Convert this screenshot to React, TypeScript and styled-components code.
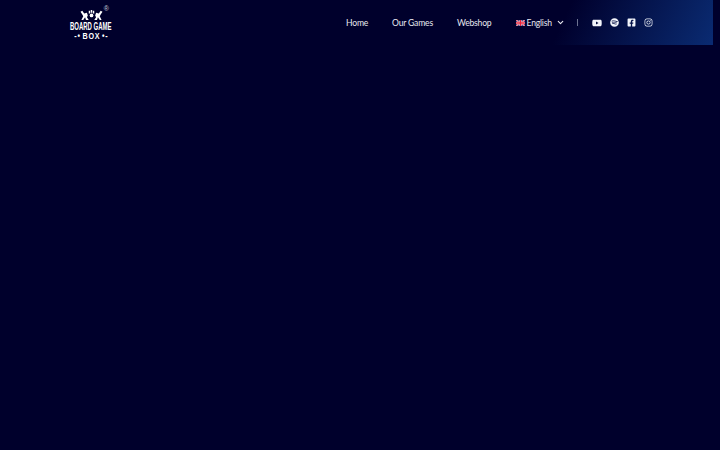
import React from 'react'
import styled, { createGlobalStyle } from 'styled-components'
import { FaYoutube, FaSpotify, FaFacebookSquare, FaInstagram } from 'react-icons/fa'
import { FiChevronDown } from 'react-icons/fi'

const GlobalStyle = createGlobalStyle`
  html, body {
    margin: 0;
    padding: 0;
    height: 100%;
    overflow: hidden;
    background: #00002c;
  }
`

const links = ['Home', 'Our Games', 'Webshop']
const socials = [FaYoutube, FaSpotify, FaFacebookSquare, FaInstagram]

const App: React.FC = () => {
  return (
    <>
      <GlobalStyle />
      <StyledPage>
        <StyledHeader>
          <StyledLogo>
            <StyledMascot viewBox="0 0 24 12" aria-hidden="true">
              <path d="M0 3l2-1 2 3 3-1 1 3-1 2 2 3H6L5 9l-2 3H1l2-4-1-2zM24 3l-2-1-2 3-3-1-1 3 1 2-2 3h3l1-3 2 3h2l-2-4 1-2z" fill="#fff" />
              <path d="M9 2h1.5v3H9zM11.2 1h1.6v3h-1.6zM13.5 2H15v3h-1.5z" fill="#fff" />
              <circle cx="12" cy="7" r="2" fill="#fff" />
            </StyledMascot>
            <StyledLogoTitle>BOARD GAME</StyledLogoTitle>
            <StyledLogoSub>BOX</StyledLogoSub>
            <StyledRegistered>®</StyledRegistered>
          </StyledLogo>
          <StyledNav>
            {links.map((link) => (
              <StyledNavLink key={link}>{link}</StyledNavLink>
            ))}
            <StyledLanguage>
              <StyledFlag viewBox="0 0 60 40" aria-hidden="true">
                <rect width="60" height="40" fill="#2b3f87" />
                <path d="M0 0l60 40M60 0L0 40" stroke="#fff" strokeWidth="8" />
                <path d="M0 0l60 40M60 0L0 40" stroke="#e8203a" strokeWidth="5" />
                <path d="M30 0v40M0 20h60" stroke="#fff" strokeWidth="13" />
                <path d="M30 0v40M0 20h60" stroke="#e8203a" strokeWidth="9" />
              </StyledFlag>
              <StyledLanguageName>English</StyledLanguageName>
              <FiChevronDown size={9} strokeWidth={3} />
            </StyledLanguage>
          </StyledNav>
          <StyledDivider />
          <StyledSocials>
            {socials.map((Icon, i) => (
              <StyledSocial key={i}>
                <Icon size={i === 0 ? 10 : 9} />
              </StyledSocial>
            ))}
          </StyledSocials>
        </StyledHeader>
      </StyledPage>
    </>
  )
}

const StyledPage = styled.div`
  width: 720px;
  height: 450px;
  background: #00002c;
  font-family: 'Lato', 'Noto Sans', sans-serif;
`

const StyledHeader = styled.header`
  box-sizing: border-box;
  display: flex;
  align-items: center;
  width: 713px;
  height: 45px;
  padding-left: 70px;
  background: linear-gradient(115deg, rgba(0, 0, 44, 0) 78%, #0a2b72 100%);
`

const StyledLogo = styled.div`
  position: relative;
  display: flex;
  flex-direction: column;
  align-items: center;
  width: 42px;
  padding-top: 4px;
  color: #fff;
  font-family: 'Liberation Sans', sans-serif;
  font-weight: 700;
  line-height: 1;
`

const StyledMascot = styled.svg`
  width: 23px;
  height: 11px;
`

const StyledLogoTitle = styled.div`
  font-size: 10px;
  white-space: nowrap;
  transform: scaleX(0.6);
  margin-top: 2px;
`

const StyledLogoSub = styled.div`
  font-size: 9px;
  letter-spacing: 1px;
  white-space: nowrap;
  transform: scaleX(0.8);
  &::before {
    content: '-•';
    margin-right: 2px;
  }
  &::after {
    content: '•-';
    margin-left: 2px;
  }
`

const StyledRegistered = styled.span`
  position: absolute;
  top: 0;
  right: 3px;
  color: #ccd;
  font-size: 7px;
  font-weight: 400;
`

const StyledNav = styled.nav`
  display: flex;
  align-items: center;
  gap: 24px;
  margin-left: 234px;
`

const StyledNavLink = styled.a`
  color: #e8e8f0;
  font-size: 8.6px;
  letter-spacing: -0.2px;
  white-space: nowrap;
`

const StyledLanguage = styled.div`
  display: flex;
  align-items: center;
  color: #e8e8f0;
  font-size: 8.6px;
  letter-spacing: -0.2px;
  white-space: nowrap;
`

const StyledLanguageName = styled.span`
  margin: 0 4px 0 2px;
`

const StyledFlag = styled.svg`
  width: 9px;
  height: 6px;
`

const StyledDivider = styled.div`
  width: 1px;
  height: 7px;
  margin-left: 12px;
  background: #6d7391;
`

const StyledSocials = styled.div`
  display: grid;
  grid-template-columns: repeat(4, 17px);
  margin-left: 11px;
`

const StyledSocial = styled.a`
  display: flex;
  justify-content: center;
  color: #f2f4fa;
`

export default App
